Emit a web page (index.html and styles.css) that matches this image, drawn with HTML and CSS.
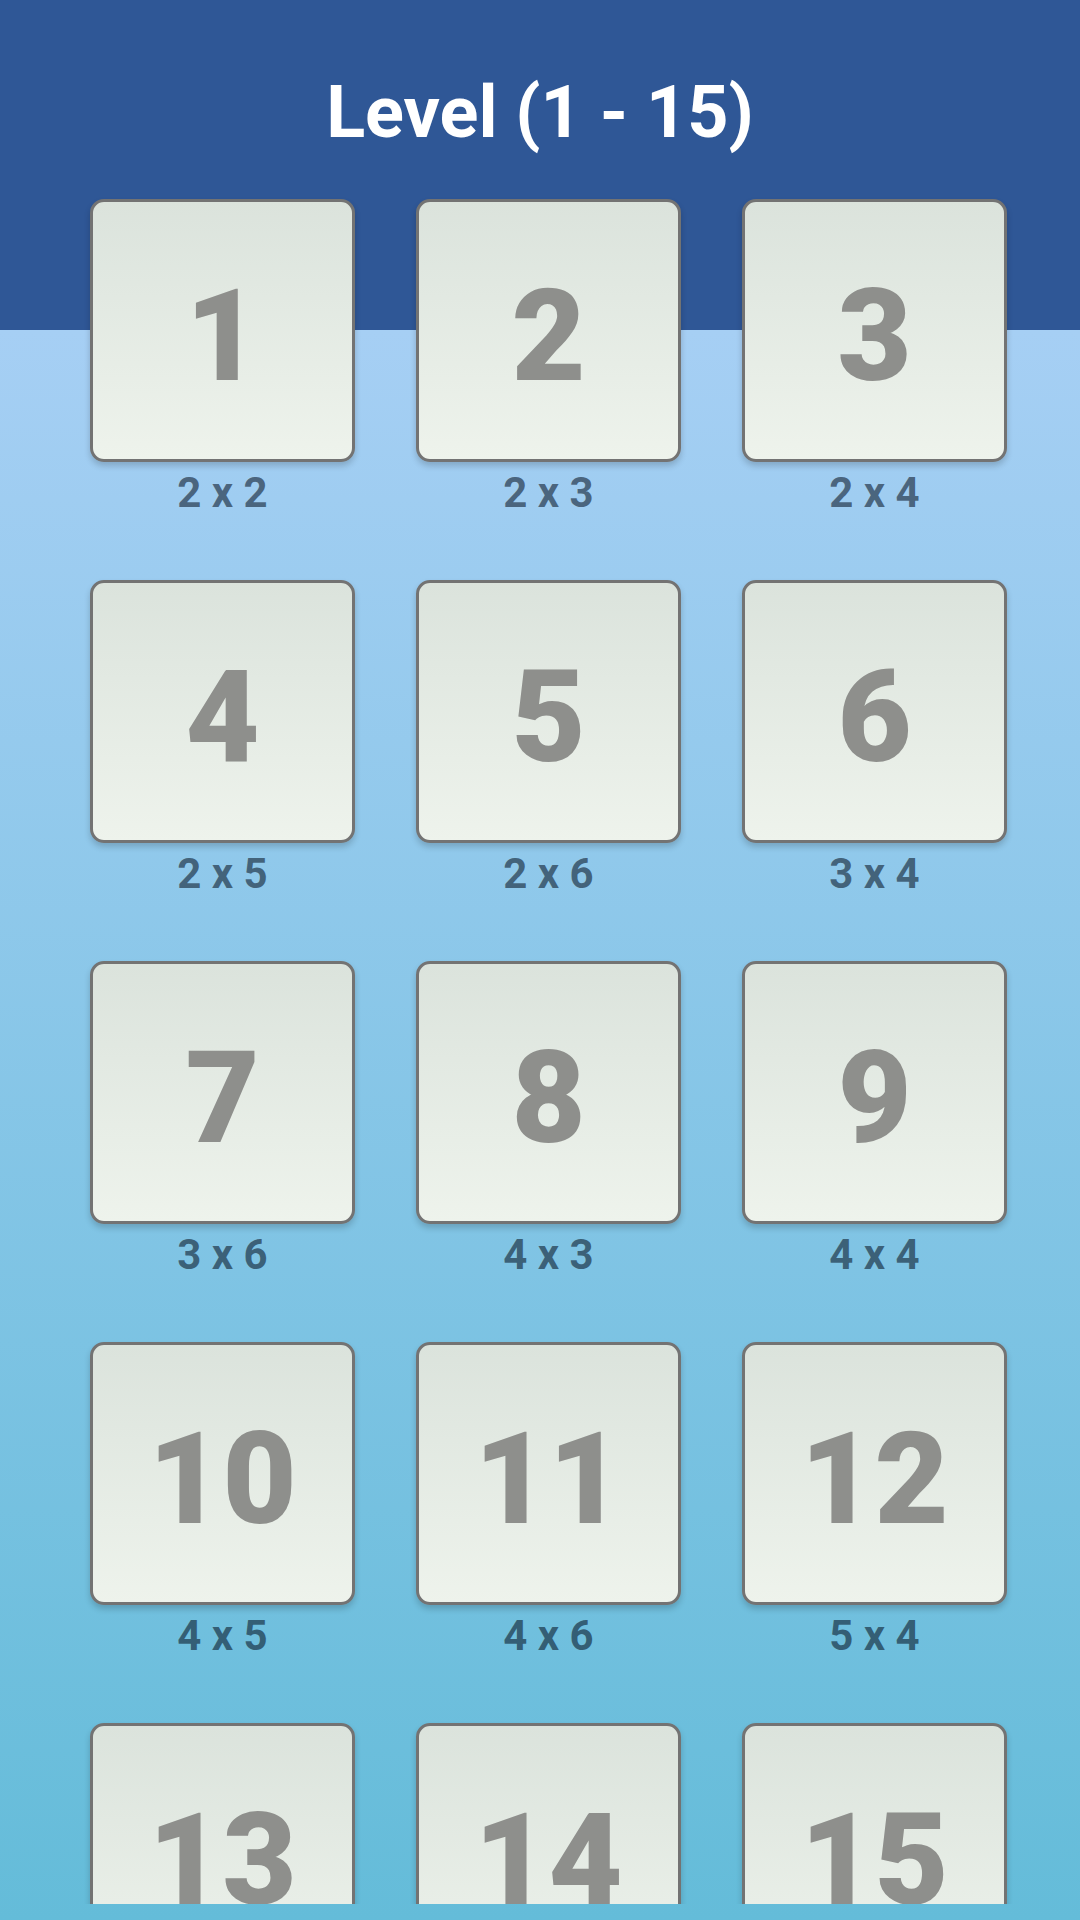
FILE: index.html
```html
<!DOCTYPE html>
<html lang="en">
<head>
<meta charset="utf-8">
<title>Level (1 - 15)</title>
<link rel="stylesheet" href="styles.css">
</head>
<body>
<div class="screen">
  <div class="scroll">
    <h1 class="title">Level (1 - 15)</h1>
    <div class="grid">
      <div class="level"><div class="card">1</div><div class="size">2 x 2</div></div>
      <div class="level"><div class="card">2</div><div class="size">2 x 3</div></div>
      <div class="level"><div class="card">3</div><div class="size">2 x 4</div></div>
      <div class="level"><div class="card">4</div><div class="size">2 x 5</div></div>
      <div class="level"><div class="card">5</div><div class="size">2 x 6</div></div>
      <div class="level"><div class="card">6</div><div class="size">3 x 4</div></div>
      <div class="level"><div class="card">7</div><div class="size">3 x 6</div></div>
      <div class="level"><div class="card">8</div><div class="size">4 x 3</div></div>
      <div class="level"><div class="card">9</div><div class="size">4 x 4</div></div>
      <div class="level"><div class="card">10</div><div class="size">4 x 5</div></div>
      <div class="level"><div class="card">11</div><div class="size">4 x 6</div></div>
      <div class="level"><div class="card">12</div><div class="size">5 x 4</div></div>
      <div class="level"><div class="card">13</div><div class="size">5 x 6</div></div>
      <div class="level"><div class="card">14</div><div class="size">6 x 5</div></div>
      <div class="level"><div class="card">15</div><div class="size">6 x 6</div></div>
    </div>
  </div>
</div>
</body>
</html>
```

FILE: styles.css
```css
* { box-sizing: border-box; }

html, body {
  margin: 0;
  padding: 0;
}

body {
  width: 1080px;
  height: 1920px;
  overflow: hidden;
  font-family: Roboto, "Noto Sans", "Liberation Sans", sans-serif;
}

.screen {
  width: 1080px;
  height: 1920px;
  background: linear-gradient(to bottom,
    #2f5796 0px, #2f5796 330px,
    #a6cff4 330px, #64bcd9 1920px);
}

.scroll {
  height: 1904px;
  overflow: hidden;
}

.title {
  margin: 0;
  padding-top: 77px;
  font-size: 72px;
  line-height: 72px;
  font-weight: 700;
  color: #ffffff;
  text-align: center;
}

.grid {
  margin-top: 50px;
  padding-left: 90px;
  display: grid;
  grid-template-columns: repeat(3, 265px);
  column-gap: 61px;
  row-gap: 66px;
}

.level {
  display: flex;
  flex-direction: column;
  align-items: center;
}

.card {
  width: 265px;
  height: 263px;
  border: 3px solid #737373;
  border-radius: 14px;
  background: linear-gradient(to bottom, #dbe3dc, #eef3ec);
  box-shadow: 0 4px 6px rgba(0, 0, 0, 0.18);
  display: flex;
  align-items: center;
  justify-content: center;
  padding-top: 11px;
  font-size: 128px;
  line-height: 128px;
  font-weight: 900;
  color: #8e8f8c;
}

.size {
  margin-top: 10px;
  font-size: 42px;
  line-height: 42px;
  font-weight: 700;
  color: rgba(0, 10, 25, 0.55);
}
```
